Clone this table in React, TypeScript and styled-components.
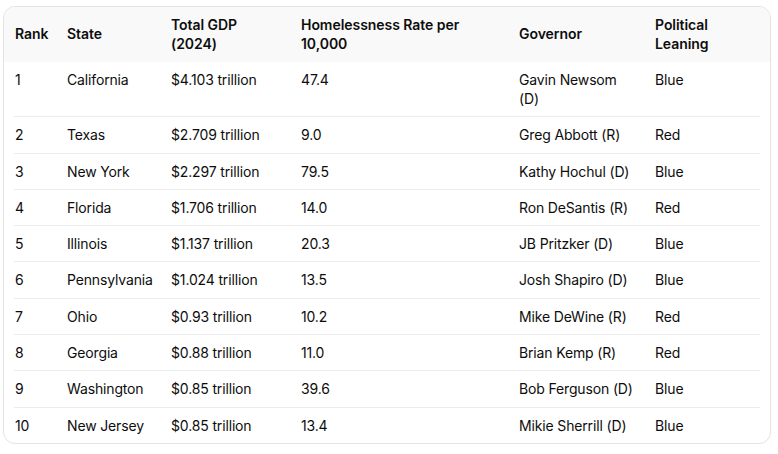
import styled, { createGlobalStyle } from "styled-components";

const GlobalStyle = createGlobalStyle`
  html, body {
    margin: 0;
    padding: 0;
    background: #ffffff;
  }
  body {
    font-family: Inter, "Noto Sans", "Liberation Sans", sans-serif;
    color: #0d0d0d;
    -webkit-font-smoothing: antialiased;
  }
`;

const Page = styled.div`
  padding: 6px 7px 0 3px;
`;

const TableCard = styled.div`
  border: 1px solid #e3e3e3;
  border-radius: 12px;
  overflow: hidden;
  background: #fff;
`;

const COLS = "52px 104px 130px 218px 136px 1fr";

const HeadRow = styled.div`
  display: grid;
  grid-template-columns: ${COLS};
  padding: 0 10px 0 11px;
  background: #f9f9f9;
`;

const HeadCell = styled.div`
  display: flex;
  align-items: center;
  padding: 7.5px 18px 8.5px 0;
  font-size: 14px;
  line-height: 19.5px;
  font-weight: 600;
  letter-spacing: -0.05px;
`;

const BodyRow = styled.div`
  display: grid;
  grid-template-columns: ${COLS};
  margin: 0 10px;
  padding-left: 1px;
  & + & {
    border-top: 1px solid #ececec;
  }
`;

const Cell = styled.div`
  padding: 8px 18px 8.3px 0;
  font-size: 14px;
  line-height: 19px;
  font-weight: 400;
  letter-spacing: -0.15px;
`;

const heads = [
  "Rank",
  "State",
  "Total GDP (2024)",
  "Homelessness Rate per 10,000",
  "Governor",
  "Political Leaning",
];

const rows = [
  ["1", "California", "$4.103 trillion", "47.4", "Gavin Newsom (D)", "Blue"],
  ["2", "Texas", "$2.709 trillion", "9.0", "Greg Abbott (R)", "Red"],
  ["3", "New York", "$2.297 trillion", "79.5", "Kathy Hochul (D)", "Blue"],
  ["4", "Florida", "$1.706 trillion", "14.0", "Ron DeSantis (R)", "Red"],
  ["5", "Illinois", "$1.137 trillion", "20.3", "JB Pritzker (D)", "Blue"],
  ["6", "Pennsylvania", "$1.024 trillion", "13.5", "Josh Shapiro (D)", "Blue"],
  ["7", "Ohio", "$0.93 trillion", "10.2", "Mike DeWine (R)", "Red"],
  ["8", "Georgia", "$0.88 trillion", "11.0", "Brian Kemp (R)", "Red"],
  ["9", "Washington", "$0.85 trillion", "39.6", "Bob Ferguson (D)", "Blue"],
  ["10", "New Jersey", "$0.85 trillion", "13.4", "Mikie Sherrill (D)", "Blue"],
];

export default function App() {
  return (
    <>
      <GlobalStyle />
      <Page>
        <TableCard>
          <HeadRow>
            {heads.map((h) => (
              <HeadCell key={h}>{h}</HeadCell>
            ))}
          </HeadRow>
          {rows.map((r) => (
            <BodyRow key={r[0]}>
              {r.map((c, i) => (
                <Cell key={i}>{c}</Cell>
              ))}
            </BodyRow>
          ))}
        </TableCard>
      </Page>
    </>
  );
}
